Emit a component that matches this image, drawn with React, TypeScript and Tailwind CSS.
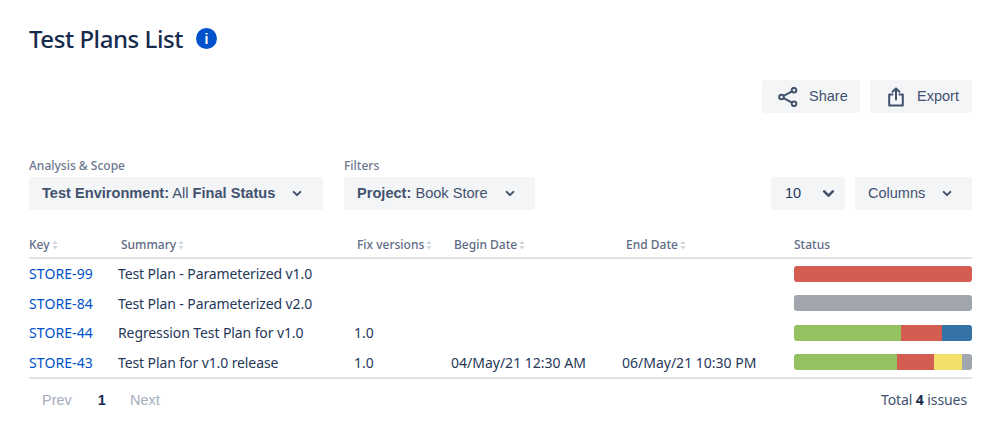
import React from "react";

const body = "font-['Noto_Sans','Open_Sans',sans-serif]";
const arial = "font-['Liberation_Sans',Arial,sans-serif]";

function Chevron({ className = "" }: { className?: string }) {
  return (
    <svg viewBox="0 0 12 8" className={className} fill="none" stroke="#42526e" strokeWidth="2.4" strokeLinecap="round" strokeLinejoin="round">
      <path d="M2 2l4 4 4-4" />
    </svg>
  );
}

function Sort() {
  return (
    <svg viewBox="0 0 6 10" className="ml-[2px] h-[10px] w-[6px]" fill="#d3d7de">
      <path d="M3 0.5L5.6 4H0.4zM3 9.5L0.4 6h5.2z" />
    </svg>
  );
}

function ShareIcon() {
  return (
    <svg viewBox="0 0 20 20" className="h-5 w-5" fill="none" stroke="#42526e" strokeWidth="2">
      <circle cx="3.5" cy="10" r="2.3" />
      <circle cx="16" cy="3.2" r="2.3" />
      <circle cx="16" cy="16.8" r="2.3" />
      <path d="M5.6 8.9L14 4.3M5.6 11.1L14 15.7" />
    </svg>
  );
}

function ExportIcon() {
  return (
    <svg viewBox="0 0 16 20" className="h-5 w-4" fill="none" stroke="#42526e" strokeWidth="2" strokeLinejoin="round" strokeLinecap="round">
      <path d="M4.5 7.5H1.2v11h13.6v-11h-3.3" />
      <path d="M8 12.5V1.5M4.6 4.8L8 1.4l3.4 3.4" />
    </svg>
  );
}

type Seg = { w: number; c: string };

const rows: { key: string; summary: string; fix: string; begin: string; end: string; bar: Seg[] }[] = [
  { key: "STORE-99", summary: "Test Plan - Parameterized v1.0", fix: "", begin: "", end: "", bar: [{ w: 178, c: "#d45d52" }] },
  { key: "STORE-84", summary: "Test Plan - Parameterized v2.0", fix: "", begin: "", end: "", bar: [{ w: 178, c: "#a1a5ad" }] },
  { key: "STORE-44", summary: "Regression Test Plan for v1.0", fix: "1.0", begin: "", end: "", bar: [{ w: 107, c: "#95c160" }, { w: 41, c: "#d45d52" }, { w: 30, c: "#3572a5" }] },
  { key: "STORE-43", summary: "Test Plan for v1.0 release", fix: "1.0", begin: "04/May/21 12:30 AM", end: "06/May/21 10:30 PM", bar: [{ w: 103, c: "#95c160" }, { w: 37, c: "#d45d52" }, { w: 28, c: "#f3e06a" }, { w: 10, c: "#a1a5ad" }] },
];

const grid = "grid grid-cols-[89px_236px_97px_171px_172px_178px]";

export default function App() {
  return (
    <div className={`h-[443px] w-[999px] overflow-hidden bg-white pl-[29px] pr-[27px] ${body}`}>
      <div className="flex h-[77px] items-center gap-[13px]">
        <h1 className="text-[24px] leading-[30px] font-medium tracking-[-0.45px] text-[#172b4d]">Test Plans List</h1>
        <span className={`flex h-[21px] w-[21px] items-center justify-center rounded-full bg-[#0052cc] text-[14px] leading-none font-bold text-white ${arial}`}>i</span>
      </div>

      <div className={`mt-[3px] flex justify-end gap-[10px] text-[14.5px] text-[#42526e] ${arial}`}>
        <button className="flex h-[33px] w-[98px] items-center gap-[11px] rounded-[3px] bg-[#f4f5f7] pl-[16px]">
          <ShareIcon />
          <span>Share</span>
        </button>
        <button className="flex h-[33px] w-[102px] items-center gap-[13px] rounded-[3px] bg-[#f4f5f7] pl-[18px]">
          <ExportIcon />
          <span>Export</span>
        </button>
      </div>

      <div className="mt-[45px] flex items-end">
        <div>
          <div className="mb-[3px] text-[12px] leading-[16px] font-medium text-[#6b778c]">Analysis &amp; Scope</div>
          <button className={`flex h-[33px] w-[294px] items-center rounded-[3px] bg-[#f4f5f7] pl-[13px] text-[14.6px] whitespace-nowrap text-[#42526e] ${arial}`}>
            <span><b>Test Environment:</b> All <b>Final Status</b></span>
            <Chevron className="ml-[17px] h-[7px] w-[10px]" />
          </button>
        </div>
        <div className="ml-[21px]">
          <div className="mb-[3px] text-[12px] leading-[16px] font-medium text-[#6b778c]">Filters</div>
          <button className={`flex h-[33px] w-[191px] items-center rounded-[3px] bg-[#f4f5f7] pl-[13px] text-[14.6px] whitespace-nowrap text-[#42526e] ${arial}`}>
            <span><b>Project:</b> Book Store</span>
            <Chevron className="ml-[17px] h-[7px] w-[10px]" />
          </button>
        </div>
        <div className={`ml-auto flex gap-[10px] text-[14.5px] text-[#42526e] ${arial}`}>
          <button className="flex h-[33px] w-[74px] items-center rounded-[3px] bg-[#f4f5f7] pl-[14px] text-[#253858]">
            <span>10</span>
            <Chevron className="ml-[21px] h-[9px] w-[13px]" />
          </button>
          <button className="flex h-[33px] w-[117px] items-center rounded-[3px] bg-[#f4f5f7] pl-[13px]">
            <span>Columns</span>
            <Chevron className="ml-[17px] h-[7px] w-[10px]" />
          </button>
        </div>
      </div>

      <div className="mt-[24px] w-[943px]">
        <div className={`${grid} h-[25px] items-center border-b-2 border-[#dfe1e6] pb-[1px] text-[12px] font-medium text-[#5e6c84]`}>
          <div className="flex items-center">Key<Sort /></div>
          <div className="flex items-center pl-[3px]">Summary<Sort /></div>
          <div className="flex items-center pl-[3px]">Fix versions<Sort /></div>
          <div className="flex items-center pl-[3px]">Begin Date<Sort /></div>
          <div className="flex items-center pl-[4px]">End Date<Sort /></div>
          <div>Status</div>
        </div>
        <div className="border-b-2 border-[#dfe1e6]">
          {rows.map((r) => (
            <div key={r.key} className={`${grid} h-[29.5px] items-center text-[14px] leading-[20px] whitespace-nowrap text-[#253858]`}>
              <a className="pt-[1px] tracking-[0.1px] text-[#0052cc]">{r.key}</a>
              <div className="pt-[1px] tracking-[-0.1px]">{r.summary}</div>
              <div className="pt-[1px]">{r.fix}</div>
              <div className="pt-[1px]">{r.begin}</div>
              <div className="pt-[1px]">{r.end}</div>
              <div className="flex h-[16px] overflow-hidden rounded-[3px]">
                {r.bar.map((s, i) => (
                  <div key={i} className="h-full" style={{ width: s.w, backgroundColor: s.c }} />
                ))}
              </div>
            </div>
          ))}
        </div>
        <div className="mt-[11px] flex items-center justify-between leading-[20px]">
          <div className={`flex items-center pl-[13px] text-[14.5px] ${arial}`}>
            <span className="text-[#a5adba]">Prev</span>
            <b className="ml-[26px] text-[#172b4d]">1</b>
            <span className="ml-[24px] text-[#a5adba]">Next</span>
          </div>
          <div className="pr-[5px] text-[14px] tracking-[-0.1px] text-[#42526e]">Total <b className="text-[#172b4d]">4</b> issues</div>
        </div>
      </div>
    </div>
  );
}
